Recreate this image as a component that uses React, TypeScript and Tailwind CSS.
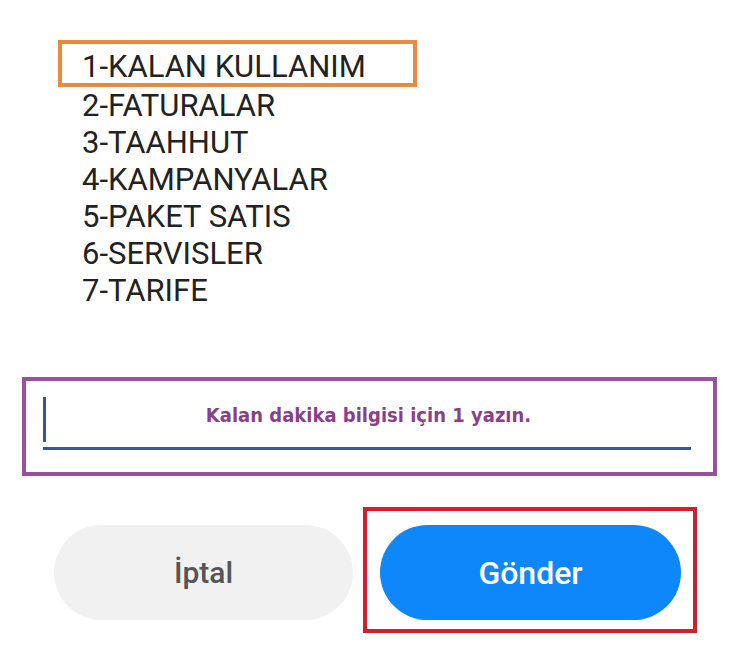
const items = [
	"2-FATURALAR",
	"3-TAAHHUT",
	"4-KAMPANYALAR",
	"5-PAKET SATIS",
	"6-SERVISLER",
	"7-TARIFE",
];

export default function App() {
	return (
		<div className="w-[736px] h-[649px] bg-white overflow-hidden font-['Roboto',sans-serif]">
			{/* menu */}
			<div className="pt-[40px] pl-[58px] text-[31px] leading-[37px] text-[#222]">
				<div className="w-[359px] h-[47px] border-4 border-[#ea8a3c] pl-[20px] pt-[4px]">
					1-KALAN KULLANIM
				</div>
				<div className="pl-[24px]">
					{items.map((item) => (
						<div key={item}>{item}</div>
					))}
				</div>
			</div>

			{/* input */}
			<div className="mt-[68px] ml-[22px] w-[695px] h-[99px] border-4 border-[#9c4f9f] px-[17px] pt-[16px]">
				<div className="flex items-start h-[45px] w-[648px]">
					<div className="w-[3px] h-[45px] bg-[#36559a]" />
					<div className="flex-1 text-center mt-[6px] text-[20px] leading-[24px] font-bold text-[#8b3f8b] font-['DejaVu_Sans_Condensed','DejaVu_Sans',sans-serif]">
						Kalan dakika bilgisi için 1 yazın.
					</div>
				</div>
				<div className="mt-[5px] w-[648px] h-[3px] bg-[#36559a]" />
			</div>

			{/* buttons */}
			<div className="mt-[31px] pl-[54px] flex items-start gap-[10px]">
				<button className="mt-[18px] w-[299px] h-[95px] rounded-full bg-[#f1f1f1] text-[30px] font-medium text-[#555]">
					İptal
				</button>
				<div className="w-[334px] h-[126px] border-4 border-[#d0202e] pt-[14px] pl-[13px]">
					<button className="w-[301px] h-[95px] rounded-full bg-[#0d87fa] text-[32px] font-medium text-white">
						Gönder
					</button>
				</div>
			</div>
		</div>
	);
}
